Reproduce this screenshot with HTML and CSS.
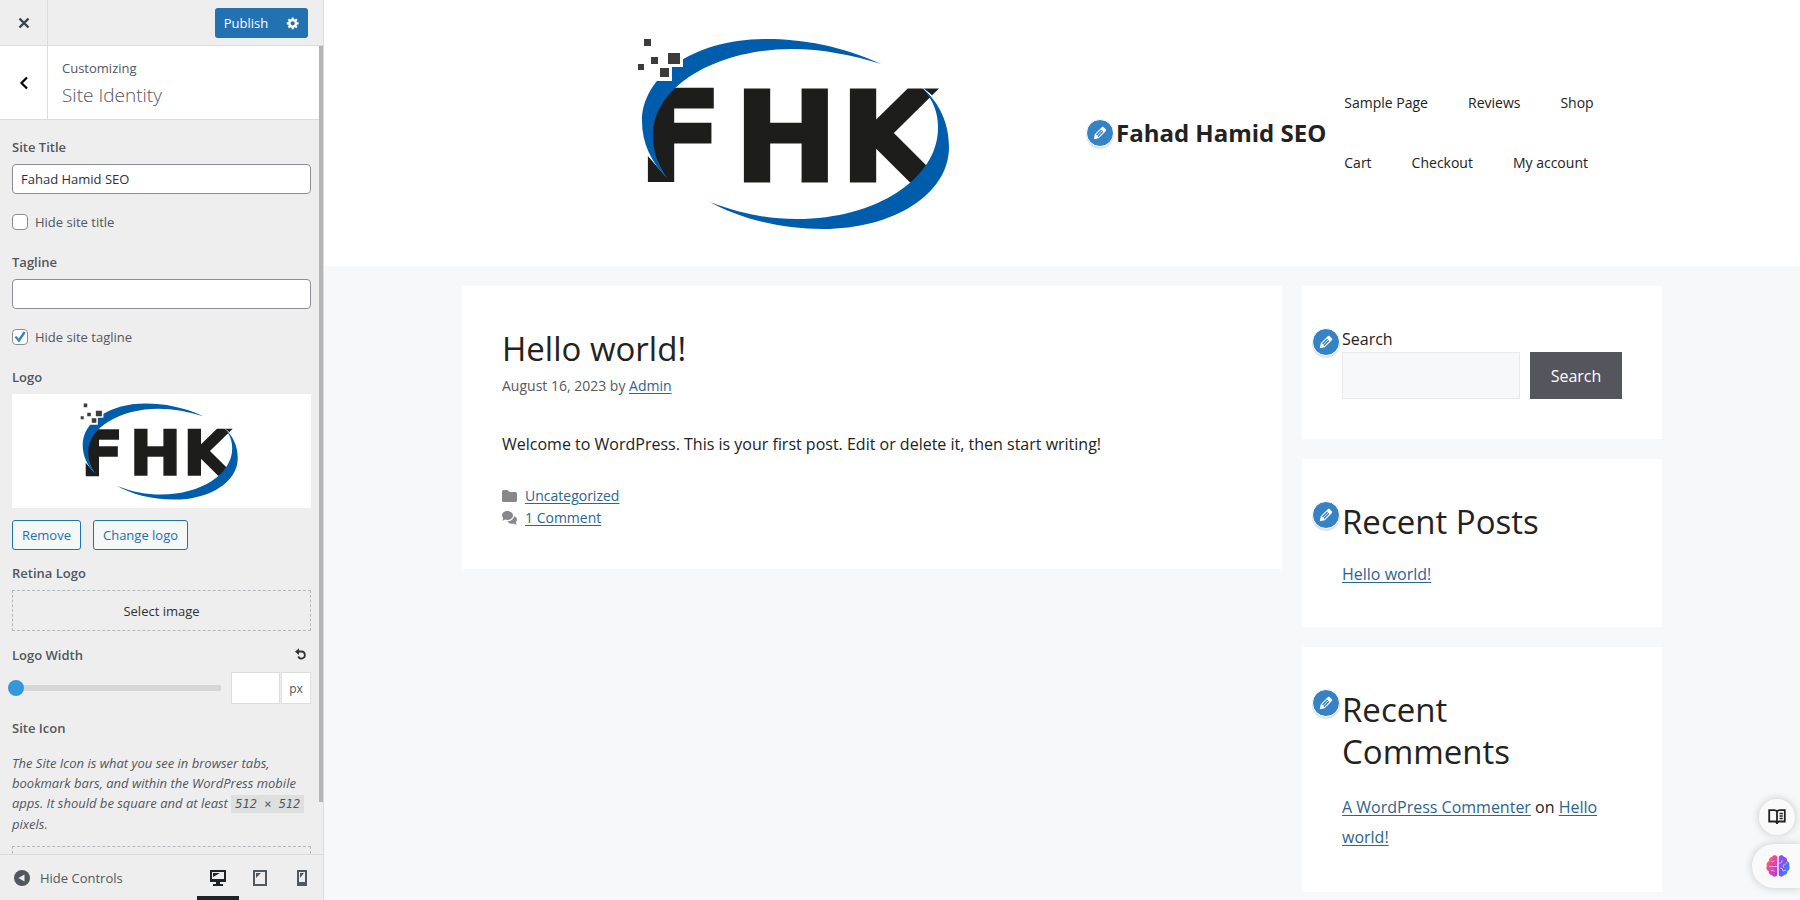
FILE: index.html
```html
<!DOCTYPE html>
<html lang="en">

<head>
    <meta charset="UTF-8">
    <meta name="viewport" content="width=device-width, initial-scale=1.0">
    <title>Customize: Fahad Hamid SEO</title>
    <link rel="stylesheet" href="styles.css">
</head>

<body>
    <!-- Shared shapes -->
    <svg class="sprites" aria-hidden="true">
        <symbol id="fhk-logo" viewBox="0 0 592 226">
            <text class="logo-letters" y="161"><tspan x="136">F</tspan><tspan x="232">H</tspan><tspan x="338">K</tspan></text>
            <path fill="#fff" d="M128 60H174L148 92V118C151 135 158 149 165 158L138 127L128 125Z" />
            <path fill="#fff" d="M447 125C447 143 440 155 428 168H480V125Z" />
            <path fill="#fff" d="M418 66C432 78 440 90 444 106L448 103C442 86 432 75 418 66Z" />
            <path fill="#005dac" d="M379 44C340 26 300 19 265 19C190 19 140 57 140 101C140 123 149 142 165 158C155 143 151 131 151 115C151 66 215 29 290 29C320 29 350 35 379 44Z" />
            <path fill="#005dac" d="M421 69C438 83 447 104 447 127C447 175 390 209 321 209C275 209 235 197 208 182C240 194 265 199 295 199C375 199 436 158 436 108C436 92 431 80 421 69Z" />
            <path fill="#fff" d="M154 30H181V47H170V61H154Z" />
            <path fill="#3c3c3b" d="M142 19h7v7h-7zM149 37h7v7h-7zM136 44h6v6h-6zM166 33h12v11h-12zM158 48h9v9h-9z" />
        </symbol>
        <symbol id="pencil" viewBox="0 0 20 20">
            <path d="M13.89 3.39l2.71 2.72c.46.46.42 1.24.03 1.64l-8.01 8.02-5.56 1.16 1.16-5.58s7.6-7.63 7.99-8.03c.39-.39 1.22-.39 1.68.07zm-2.73 2.79l-5.59 5.61 1.11 1.11 5.54-5.65zm-2.97 8.23l5.58-5.6-1.07-1.08-5.59 5.6z" />
        </symbol>
    </svg>

    <div class="customizer">
        <!-- Controls -->
        <form class="controls">
            <header class="controls-header">
                <button type="button" class="close" aria-label="Close">
                    <svg width="12" height="12" viewBox="0 0 12 12"><path d="M1.5 1.5L10.5 10.5M10.5 1.5L1.5 10.5" stroke="currentColor" stroke-width="2.4" /></svg>
                </button>
                <div class="publish">
                    <button type="button" class="publish-save">Publish</button>
                    <button type="button" class="publish-settings" aria-label="Publish settings">
                        <svg width="14" height="14" viewBox="0 0 20 20" fill="currentColor"><path d="M18 12h-2.18c-.17.7-.44 1.35-.81 1.93l1.54 1.54-2.1 2.1-1.54-1.54c-.58.36-1.23.63-1.91.79V19H8v-2.18c-.68-.16-1.33-.43-1.91-.79l-1.54 1.54-2.12-2.12 1.54-1.54c-.36-.58-.63-1.23-.79-1.91H1V9.03h2.17c.16-.7.44-1.35.8-1.94L2.43 5.55l2.1-2.1 1.54 1.54c.58-.37 1.24-.64 1.93-.81V2h3v2.18c.68.16 1.33.43 1.91.79l1.54-1.54 2.12 2.12-1.54 1.54c.36.59.64 1.24.8 1.94H18V12zm-8.5 1.5c1.66 0 3-1.34 3-3s-1.34-3-3-3-3 1.34-3 3 1.34 3 3 3z" /></svg>
                    </button>
                </div>
            </header>

            <div class="section-title">
                <button type="button" class="back" aria-label="Back">
                    <svg width="10" height="14" viewBox="0 0 10 14"><path d="M8 1.5L2.5 7L8 12.5" fill="none" stroke="currentColor" stroke-width="2.2" /></svg>
                </button>
                <h3><span>Customizing</span>Site Identity</h3>
            </div>

            <div class="fields">
                <label class="field-label" for="site-title">Site Title</label>
                <input class="text-field" type="text" id="site-title" value="Fahad Hamid SEO">
                <label class="check"><input type="checkbox">Hide site title</label>

                <label class="field-label" for="tagline">Tagline</label>
                <input class="text-field" type="text" id="tagline">
                <label class="check"><input type="checkbox" checked>Hide site tagline</label>

                <div class="field-label">Logo</div>
                <div class="logo-preview"><svg viewBox="0 0 592 226"><use href="#fhk-logo" /></svg></div>
                <div class="logo-actions">
                    <button type="button">Remove</button>
                    <button type="button">Change logo</button>
                </div>

                <div class="field-label">Retina Logo</div>
                <button type="button" class="select-image">Select image</button>

                <div class="width-head">
                    <label class="field-label" for="logo-width">Logo Width</label>
                    <button type="button" class="reset" aria-label="Reset">
                        <svg width="12" height="12" viewBox="0 0 12 12"><path d="M2.5 3.5H6.5a3.5 3.5 0 1 1-3.3 5" fill="none" stroke="currentColor" stroke-width="1.8" /><path d="M0 3.7L4 .2V7Z" fill="currentColor" /></svg>
                    </button>
                </div>
                <div class="width-row">
                    <input type="range" id="logo-width" min="20" max="1200" value="20">
                    <input type="text" class="width-value" aria-label="Logo width in pixels">
                    <span class="unit">px</span>
                </div>

                <div class="field-label">Site Icon</div>
                <p class="description">The Site Icon is what you see in browser tabs, bookmark bars, and within the WordPress mobile apps. It should be square and at least <code>512 × 512</code> pixels.</p>
                <button type="button" class="select-image" aria-label="Select site icon"></button>
            </div>
            <div class="scroll-thumb"></div>

            <footer class="controls-footer">
                <button type="button" class="hide-controls">
                    <svg width="16" height="16" viewBox="0 0 16 16"><circle cx="8" cy="8" r="8" fill="#50575e" /><path d="M10.5 4.5V11.5L4.5 8Z" fill="#eee" /></svg>
                    Hide Controls
                </button>
                <div class="devices">
                    <button type="button" class="active" aria-label="Desktop">
                        <svg width="16" height="16" viewBox="0 0 16 16" fill="currentColor"><path fill-rule="evenodd" d="M0 0H16V12H10V14H13V16H3V14H6V12H0ZM2 2V9H14V2Z" /><path d="M3 3H10L3 7Z" /></svg>
                    </button>
                    <button type="button" aria-label="Tablet">
                        <svg width="14" height="16" viewBox="0 0 14 16" fill="currentColor"><path fill-rule="evenodd" d="M0 0H14V16H0ZM2 2V14H12V2Z" /><path d="M3 3H8L3 8Z" /></svg>
                    </button>
                    <button type="button" aria-label="Mobile">
                        <svg width="10" height="16" viewBox="0 0 10 16" fill="currentColor"><path fill-rule="evenodd" d="M0 0H10V16H0ZM2 2V12H8V2Z" /><path d="M3 3H7L3 8Z" /></svg>
                    </button>
                </div>
            </footer>
        </form>

        <!-- Site preview -->
        <div class="preview">
            <header class="site-header">
                <div class="inside-header">
                    <a class="site-logo" href="#" aria-label="Fahad Hamid SEO"><svg viewBox="0 0 592 226"><use href="#fhk-logo" /></svg></a>
                    <div class="branding editable">
                        <button type="button" class="edit" aria-label="Edit site title"><svg width="18" height="18"><use href="#pencil" /></svg></button>
                        <a class="main-title" href="#">Fahad Hamid SEO</a>
                    </div>
                    <nav class="site-nav">
                        <a href="#">Sample Page</a>
                        <a href="#">Reviews</a>
                        <a href="#">Shop</a>
                        <a href="#">Cart</a>
                        <a href="#">Checkout</a>
                        <a href="#">My account</a>
                    </nav>
                </div>
            </header>

            <div class="site-content">
                <article class="post">
                    <h2>Hello world!</h2>
                    <div class="meta">August 16, 2023 by <a href="#">Admin</a></div>
                    <p>Welcome to WordPress. This is your first post. Edit or delete it, then start writing!</p>
                    <div class="post-footer">
                        <div>
                            <svg width="15" height="12" viewBox="0 0 15 12" fill="#87878c"><path d="M1.5 0H5.5L7.5 2H13.5A1.5 1.5 0 0 1 15 3.5V10.5A1.5 1.5 0 0 1 13.5 12H1.5A1.5 1.5 0 0 1 0 10.5V1.5A1.5 1.5 0 0 1 1.5 0Z" /></svg>
                            <a href="#">Uncategorized</a>
                        </div>
                        <div>
                            <svg width="15" height="14" viewBox="0 0 15 14" fill="#87878c"><path d="M5.5 0C8.6 0 11 2 11 4.6S8.6 9 5.5 9C4.6 9 3.8 8.8 3.1 8.5C2.3 9.1 1.2 9.5 0 9.5C.7 8.8 1.1 8 1.2 7.2C.4 6.4 0 5.5 0 4.6C0 2 2.4 0 5.5 0Z" /><path d="M12 5C13.8 5.7 15 7 15 8.7C15 9.6 14.6 10.5 13.8 11.2C13.9 12 14.3 12.9 15 13.7C13.7 13.7 12.6 13.2 11.8 12.6C9.3 13.2 6.7 12.2 5.5 10.2C9 10.2 12 8 12 5Z" /></svg>
                            <a href="#">1 Comment</a>
                        </div>
                    </div>
                </article>

                <aside class="widgets">
                    <section class="widget">
                        <div class="editable">
                            <button type="button" class="edit" aria-label="Edit search widget"><svg width="18" height="18"><use href="#pencil" /></svg></button>
                            <label class="search-label" for="search">Search</label>
                            <div class="search-row">
                                <input type="search" id="search">
                                <button type="button">Search</button>
                            </div>
                        </div>
                    </section>
                    <section class="widget">
                        <div class="editable">
                            <button type="button" class="edit" aria-label="Edit recent posts"><svg width="18" height="18"><use href="#pencil" /></svg></button>
                            <h2>Recent Posts</h2>
                            <p class="recent"><a href="#">Hello world!</a></p>
                        </div>
                    </section>
                    <section class="widget">
                        <div class="editable">
                            <button type="button" class="edit" aria-label="Edit recent comments"><svg width="18" height="18"><use href="#pencil" /></svg></button>
                            <h2>Recent Comments</h2>
                            <p class="comments"><a href="#">A WordPress Commenter</a> on <a href="#">Hello world!</a></p>
                        </div>
                    </section>
                </aside>
            </div>
        </div>
    </div>

    <!-- Floating tools -->
    <div class="floating">
        <button type="button" class="reader" aria-label="Reader">
            <svg width="18" height="16" viewBox="0 0 18 16" fill="none" stroke="#222" stroke-width="1.8"><path d="M9 2.5C8.5 1.5 7.5 1.2 6 1.2H1.2V12.5H7C8 12.5 9 13 9 15C9 13 10 12.5 11 12.5H16.8V1.2H12C10.5 1.2 9.5 1.5 9 2.5V14" /><path d="M11.5 4.5H14.8M11.5 7H14.8M11.5 9.5H14.8" stroke-width="1.4" /></svg>
        </button>
        <button type="button" class="brain" aria-label="Assistant">
            <svg width="24" height="22" viewBox="0 0 24 22">
                <defs>
                    <linearGradient id="brain-left" x1="0" y1="0" x2="1" y2="1">
                        <stop offset="0" stop-color="#ff8a3c" />
                        <stop offset=".4" stop-color="#f0469c" />
                        <stop offset="1" stop-color="#a044e8" />
                    </linearGradient>
                    <linearGradient id="brain-right" x1="0" y1="0" x2="1" y2="1">
                        <stop offset="0" stop-color="#b43df0" />
                        <stop offset=".5" stop-color="#6a5bf0" />
                        <stop offset="1" stop-color="#1ea0ff" />
                    </linearGradient>
                </defs>
                <path fill="url(#brain-left)" d="M11.3 2C10.5 0 7 -.5 6 2C4 2 2.5 4 3 6C1 7 0 9 .8 11C-.3 13 .8 15.5 2.5 16C2.5 18.5 4 20 6 20C7.5 22.5 10.8 22 11.3 19.5Z" />
                <path fill="url(#brain-right)" d="M12.7 2C13.5 0 17 -.5 18 2C20 2 21.5 4 21 6C23 7 24 9 23.2 11C24.3 13 23.2 15.5 21.5 16C21.5 18.5 20 20 18 20C16.5 22.5 13.2 22 12.7 19.5Z" />
                <path fill="none" stroke="#fff" stroke-opacity=".7" stroke-width=".8" d="M3 11.5H11M5 6Q7 8 8.5 5.5M5 15.5Q7 14 8.5 17M13 8Q16 9 16 5M21 7Q20 10 17 10L18 13M14 13Q17 13 17 16L20 15" />
            </svg>
        </button>
    </div>
</body>

</html>
```
FILE: styles.css
```css
* {
    box-sizing: border-box;
}

body {
    margin: 0;
    font-family: "Open Sans", "Noto Sans", sans-serif;
    background: #f7f8f9;
}

button,
input {
    font-family: inherit;
}

button {
    padding: 0;
    border: none;
    background: none;
    cursor: pointer;
}

svg {
    display: block;
}

.sprites {
    display: none;
}

.logo-letters {
    font-family: "DejaVu Sans", sans-serif;
    font-size: 124px;
    font-weight: 700;
    fill: #1d1d1b;
    stroke: #1d1d1b;
    stroke-width: 3px;
}

.customizer {
    display: flex;
    height: 100vh;
    overflow: hidden;
}

/* Controls */

.controls {
    position: relative;
    display: flex;
    flex-direction: column;
    flex: 0 0 324px;
    background: #eee;
    border-right: 1px solid #dcdcde;
    color: #50575e;
    font-size: 13px;
}

.controls-header {
    display: flex;
    flex: 0 0 46px;
    justify-content: space-between;
    align-items: center;
    padding-right: 15px;
    border-bottom: 1px solid #dcdcde;
}

.close,
.back {
    display: flex;
    align-items: center;
    justify-content: center;
    width: 48px;
    align-self: stretch;
    border-right: 1px solid #dcdcde;
    color: #3c434a;
}

.back {
    color: #000;
}

.publish {
    display: flex;
    height: 30px;
    background: #2271b1;
    border-radius: 3px;
}

.publish button {
    color: #fff;
    font-size: 13px;
}

.publish-save {
    width: 62px;
}

.publish-settings {
    display: flex;
    align-items: center;
    justify-content: center;
    width: 31px;
}

.section-title {
    display: flex;
    flex: 0 0 74px;
    background: #fff;
    border-bottom: 1px solid #dcdcde;
}

.section-title h3 {
    margin: 0;
    padding: 12px 14px 0;
    font-size: 19px;
    font-weight: 300;
    line-height: 28px;
}

.section-title span {
    display: block;
    margin-bottom: 3px;
    font-size: 13px;
    font-weight: 400;
    line-height: 20px;
}

.fields {
    flex: 1;
    min-height: 0;
    padding: 15px 12px 0;
    overflow: hidden;
}

.field-label {
    display: block;
    margin-bottom: 5px;
    font-size: 13px;
    font-weight: 600;
    line-height: 24px;
}

.text-field {
    display: block;
    width: 100%;
    height: 30px;
    margin-bottom: 16px;
    padding: 0 8px;
    border: 1px solid #8c8f94;
    border-radius: 4px;
    background: #fff;
    color: #2c3338;
    font-size: 13px;
}

.check {
    display: flex;
    align-items: center;
    height: 24px;
    margin-bottom: 16px;
}

.check input {
    appearance: none;
    width: 16px;
    height: 16px;
    margin: 0 7px 0 0;
    border: 1px solid #8c8f94;
    border-radius: 4px;
    background: #fff;
}

.check input:checked::before {
    content: "";
    display: block;
    width: 12px;
    height: 12px;
    margin: 1px;
    background: #3582c4;
    clip-path: polygon(4% 50%, 20% 42%, 38% 65%, 80% 5%, 98% 12%, 42% 95%);
}

.logo-preview {
    margin-bottom: 12px;
    background: #fff;
}

.logo-actions {
    display: flex;
    gap: 12px;
    margin-bottom: 11px;
}

.logo-actions button {
    height: 30px;
    padding: 0 9px;
    border: 1px solid #2271b1;
    border-radius: 3px;
    background: #f6f7f7;
    color: #2271b1;
    font-size: 13px;
}

.select-image {
    display: block;
    width: 100%;
    height: 41px;
    margin-bottom: 12px;
    border: 1px dashed #b4b9be;
    color: #2c3338;
    font-size: 13px;
}

.width-head {
    display: flex;
    justify-content: space-between;
    padding-right: 4px;
}

.reset {
    align-self: flex-start;
    padding: 5px 0;
    color: #333;
}

.width-row {
    display: flex;
    align-items: center;
    margin-bottom: 12px;
}

.width-row input[type="range"] {
    appearance: none;
    flex: 1;
    min-width: 0;
    height: 6px;
    margin: 0 10px 0 -4px;
    background: linear-gradient(#d7d7d7, #d7d7d7) no-repeat right / calc(100% - 6px) 100%;
}

.width-row input[type="range"]::-webkit-slider-thumb {
    appearance: none;
    width: 16px;
    height: 16px;
    border-radius: 50%;
    background: #3498db;
}

.width-value,
.unit {
    height: 32px;
    border: 1px solid #ddd;
    background: #fff;
}

.width-value {
    width: 49px;
}

.unit {
    width: 30px;
    margin-left: 1px;
    font-size: 12px;
    line-height: 32px;
    text-align: center;
}

.description {
    margin: 13px 0 12px;
    font-size: 13px;
    font-style: italic;
    line-height: 20px;
}

.description code {
    padding: 2px 4px;
    background: #dedfdf;
    font-family: "DejaVu Sans Mono", monospace;
    font-size: 12px;
}

.scroll-thumb {
    position: absolute;
    top: 46px;
    right: 0;
    width: 4px;
    height: 84%;
    background: #b4b4b4;
}

.controls-footer {
    display: flex;
    flex: 0 0 46px;
    justify-content: space-between;
    border-top: 1px solid #dcdcde;
}

.hide-controls {
    display: flex;
    align-items: center;
    gap: 10px;
    padding-left: 14px;
    color: #50575e;
    font-size: 13px;
}

.devices {
    display: flex;
}

.devices button {
    display: flex;
    align-items: center;
    justify-content: center;
    width: 42px;
    padding-top: 4px;
    border-bottom: 4px solid transparent;
    color: #50575e;
}

.devices .active {
    border-color: #1d2327;
    color: #1d2327;
}

/* Site preview */

.preview {
    flex: 1;
    min-width: 0;
    color: #222;
    font-size: 16px;
}

.preview a {
    color: #2b6592;
    text-underline-offset: 2px;
}

.site-header {
    background: #fff;
}

.inside-header {
    display: flex;
    align-items: center;
    max-width: 1200px;
    margin: 0 auto;
    padding: 20px 40px;
}

.site-logo {
    flex: 0 0 592px;
    margin-right: 22px;
}

.editable {
    position: relative;
}

.edit {
    position: absolute;
    top: 2px;
    left: -30px;
    display: flex;
    align-items: center;
    justify-content: center;
    width: 28px;
    height: 28px;
    border: 1px solid #fff;
    border-radius: 50%;
    background: #3582c4;
    box-shadow: 0 2px 1px rgba(60, 67, 74, 0.15);
    fill: #fff;
}

.preview .main-title {
    color: #222;
    font-size: 24px;
    font-weight: 700;
    line-height: 32px;
    text-decoration: none;
    white-space: nowrap;
}

.site-nav {
    display: flex;
    flex-wrap: wrap;
    column-gap: 40px;
    flex: 1;
    padding-left: 18px;
}

.preview .site-nav a {
    color: #222;
    font-size: 14px;
    line-height: 60px;
    text-decoration: none;
}

.site-content {
    display: flex;
    align-items: flex-start;
    gap: 20px;
    max-width: 1200px;
    margin: 20px auto 0;
}

.post,
.widget {
    padding: 40px;
    background: #fff;
}

.post {
    flex: 1;
}

.preview h2 {
    margin: 0;
    padding-top: 2px;
    font-size: 33px;
    font-weight: 400;
    line-height: 42px;
}

.meta {
    margin-top: 5px;
    color: #595959;
    font-size: 14px;
    line-height: 22px;
}

.post p {
    margin: 34px 0 28px;
    line-height: 26px;
}

.post-footer {
    font-size: 14px;
    line-height: 22px;
}

.post-footer div {
    display: flex;
    align-items: center;
    gap: 8px;
}

.widgets {
    display: flex;
    flex-direction: column;
    flex: 0 0 360px;
    min-width: 0;
    gap: 20px;
}

.search-label {
    display: block;
    line-height: 26px;
}

.search-row {
    display: flex;
    gap: 10px;
}

.search-row input {
    flex: 1;
    min-width: 0;
    height: 47px;
    border: 1px solid #e8eaec;
    background: #f7f8f9;
}

.search-row button {
    width: 92px;
    background: #55555e;
    color: #fff;
    font-size: 16px;
}

.recent {
    margin: 18px 0 0;
    line-height: 26px;
}

.comments {
    margin: 19px 0 0;
    line-height: 30px;
}

/* Floating tools */

.floating {
    position: fixed;
    right: 0;
    bottom: 12px;
    display: flex;
    flex-direction: column;
    align-items: flex-end;
    gap: 9px;
}

.floating button {
    display: flex;
    align-items: center;
    justify-content: center;
    background: #fafafa;
    box-shadow: 0 0 8px rgba(0, 0, 0, 0.2);
}

.reader {
    width: 36px;
    height: 36px;
    margin-right: 5px;
    border-radius: 50%;
}

.brain {
    width: 48px;
    height: 44px;
    padding-left: 4px;
    border-radius: 22px 0 0 22px;
}
```
